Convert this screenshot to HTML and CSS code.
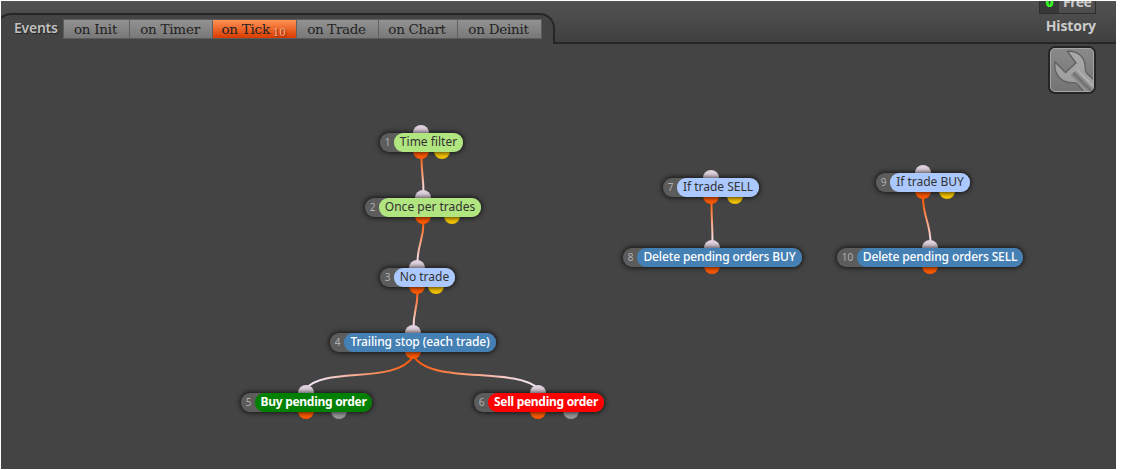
FILE: index.html
```html
<!DOCTYPE html>
<html lang="en">
<head>
  <meta charset="UTF-8" />
  <title>Events</title>
  <link rel="stylesheet" href="styles.css">
</head>
<body>
  <div class="app">
    <header class="topbar">
      <nav class="events">
        <span class="events-label">Events</span>
        <div class="tabs">
          <button class="tab tab-init"><span>on Init</span></button>
          <button class="tab tab-timer"><span>on Timer</span></button>
          <button class="tab tab-tick active"><span>on Tick</span><small>10</small></button>
          <button class="tab tab-trade"><span>on Trade</span></button>
          <button class="tab tab-chart"><span>on Chart</span></button>
          <button class="tab tab-deinit"><span>on Deinit</span></button>
        </div>
      </nav>
      <div class="account">
        <div class="plan"><b>0</b><span>Free</span></div>
        <span class="history">History</span>
      </div>
    </header>

    <main class="canvas">
      <!-- connections -->
      <svg class="wires" width="1115" height="425" viewBox="1 44 1115 425">
        <defs>
          <linearGradient id="w1" gradientUnits="userSpaceOnUse" x1="0" y1="158" x2="0" y2="192"><stop offset="0" stop-color="#ff6010"/><stop offset="1" stop-color="#f3e4f0"/></linearGradient>
          <linearGradient id="w2" gradientUnits="userSpaceOnUse" x1="0" y1="223" x2="0" y2="262"><stop offset="0" stop-color="#ff6010"/><stop offset="1" stop-color="#f3e4f0"/></linearGradient>
          <linearGradient id="w3" gradientUnits="userSpaceOnUse" x1="0" y1="293" x2="0" y2="327"><stop offset="0" stop-color="#ff6010"/><stop offset="1" stop-color="#f3e4f0"/></linearGradient>
          <linearGradient id="w5" gradientUnits="userSpaceOnUse" x1="413" y1="358" x2="318" y2="386"><stop offset="0" stop-color="#ff5500"/><stop offset="1" stop-color="#f3e4f0"/></linearGradient>
          <linearGradient id="w6" gradientUnits="userSpaceOnUse" x1="414" y1="358" x2="524" y2="386"><stop offset="0" stop-color="#ff5500"/><stop offset="1" stop-color="#f3e4f0"/></linearGradient>
          <linearGradient id="w7" gradientUnits="userSpaceOnUse" x1="0" y1="203" x2="0" y2="242"><stop offset="0" stop-color="#ff6010"/><stop offset="1" stop-color="#f3e4f0"/></linearGradient>
        </defs>
        <path d="M421.5 157C421.500 175 423.500 176 423.500 193" stroke="url(#w1)"/>
        <path d="M423.500 222C423.500 242 417.500 243 417.500 263" stroke="url(#w2)"/>
        <path d="M417.500 292C417.500 310 413.500 310 413.500 328" stroke="url(#w3)"/>
        <path d="M413.500 356C396 385 324 366 306 389" stroke="url(#w5)"/>
        <path d="M413.500 356C431 385 515 366 538.500 389" stroke="url(#w6)"/>
        <path d="M711.500 202C711.500 222 712.500 223 712.500 243" stroke="url(#w7)"/>
        <path d="M923 197C923 217 930.500 223 930.500 243" stroke="url(#w7)"/>
      </svg>

      <div class="node filter n1">
        <i class="dot in"></i><i class="dot out"></i><i class="dot out no"></i>
        <div class="block"><span class="num">1</span><span class="name">Time filter</span></div>
      </div>
      <div class="node filter n2">
        <i class="dot in"></i><i class="dot out"></i><i class="dot out no"></i>
        <div class="block"><span class="num">2</span><span class="name">Once per trades</span></div>
      </div>
      <div class="node condition n3">
        <i class="dot in"></i><i class="dot out"></i><i class="dot out no"></i>
        <div class="block"><span class="num">3</span><span class="name">No trade</span></div>
      </div>
      <div class="node action n4">
        <i class="dot in"></i><i class="dot out"></i>
        <div class="block"><span class="num">4</span><span class="name">Trailing stop (each trade)</span></div>
      </div>
      <div class="node buy n5">
        <i class="dot in"></i><i class="dot out"></i><i class="dot out err"></i>
        <div class="block"><span class="num">5</span><span class="name">Buy pending order</span></div>
      </div>
      <div class="node sell n6">
        <i class="dot in"></i><i class="dot out"></i><i class="dot out err"></i>
        <div class="block"><span class="num">6</span><span class="name">Sell pending order</span></div>
      </div>
      <div class="node condition n7">
        <i class="dot in"></i><i class="dot out"></i><i class="dot out no"></i>
        <div class="block"><span class="num">7</span><span class="name">If trade SELL</span></div>
      </div>
      <div class="node action n8">
        <i class="dot in"></i><i class="dot out"></i>
        <div class="block"><span class="num">8</span><span class="name">Delete pending orders BUY</span></div>
      </div>
      <div class="node condition n9">
        <i class="dot in"></i><i class="dot out"></i><i class="dot out no"></i>
        <div class="block"><span class="num">9</span><span class="name">If trade BUY</span></div>
      </div>
      <div class="node action n10">
        <i class="dot in"></i><i class="dot out"></i>
        <div class="block"><span class="num">10</span><span class="name">Delete pending orders SELL</span></div>
      </div>

      <button class="settings" aria-label="Settings">
        <svg width="44" height="44" viewBox="1 1 42 42">
          <defs>
            <linearGradient id="metal" x1="0" y1="0" x2="0" y2="1"><stop offset="0" stop-color="#aaa"/><stop offset="1" stop-color="#999"/></linearGradient>
            <linearGradient id="handle" gradientUnits="userSpaceOnUse" x1="21" y1="35" x2="34" y2="22"><stop offset="0" stop-color="#aaa"/><stop offset=".25" stop-color="#9c9c9c"/><stop offset=".48" stop-color="#6e6e6e"/><stop offset=".75" stop-color="#b4b4b4"/><stop offset="1" stop-color="#a4a4a4"/></linearGradient>
          </defs>
          <path d="M17.500 3.500C26 2 34 8 35 17C35.300 20 35 23 36.500 25L47 35L37 47L27 35.500C25 34 22 35 19 34.500C10 33 3.500 25 5 14L15.500 24.500L26 15Z" fill="url(#metal)" stroke="#606060" stroke-width="1.300"/>
          <path d="M20 28L27 21L48 41L41 48Z" fill="url(#handle)"/>
        </svg>
      </button>
    </main>
  </div>
</body>
</html>
```
FILE: styles.css
```css
body {
  margin: 0;
  padding: 1px;
  background: #fff;
  font-family: "Noto Sans", "Open Sans", sans-serif;
}
button {
  border: none;
  padding: 0;
}
.app {
  width: 1115px;
  height: 468px;
  overflow: hidden;
  background: #444;
}

/* top bar */
.topbar {
  display: flex;
  justify-content: space-between;
  height: 43px;
  box-sizing: border-box;
  border-bottom: 2px solid #262626;
  background: linear-gradient(#525252, #404040);
}
.events {
  display: flex;
  align-items: flex-start;
  box-sizing: border-box;
  width: 559px;
  height: 31px;
  margin: 12px 0 0 -5px;
  padding: 4px 0 0 16px;
  border: 2px solid #262626;
  border-bottom: none;
  border-radius: 15px 15px 0 0;
  background: #444;
}
.events-label {
  width: 49px;
  font-size: 14px;
  line-height: 17px;
  color: #c0c0c0;
  text-shadow: 1px 1px 1px #222;
  letter-spacing: -0.25px;
  font-weight: 600;
}
.tabs {
  display: flex;
  border: 1px solid #5c5c5c;
  height: 18px;
}
.tab {
  display: flex;
  align-items: center;
  justify-content: center;
  height: 18px;
  box-sizing: border-box;
  padding-right: 2px;
  border-right: 1px solid #606060;
  background: linear-gradient(#929292, #787878);
  color: #222;
  font-family: "DejaVu Serif", serif;
  font-size: 13.5px;
  line-height: 18px;
  letter-spacing: -0.25px;
  white-space: nowrap;
}
.tab:last-child {
  border-right: none;
}
.tab-init { width: 66px; }
.tab-timer { width: 83px; }
.tab-tick { width: 84px; }
.tab-trade { width: 82px; letter-spacing: -0.35px; }
.tab-chart { width: 79px; letter-spacing: -0.35px; }
.tab-deinit { width: 83px; }
.tab.active {
  background: linear-gradient(#ff9254, #d93b00);
}
.tab small {
  margin: 6px 0 0 3px;
  font-size: 10.5px;
  letter-spacing: -0.3px;
  color: #f3b08c;
  text-shadow: 1px 1px 1px #7c2a08;
}
.account {
  display: flex;
  flex-direction: column;
  align-items: flex-end;
  margin-right: 20px;
  color: #ccc;
  font-size: 14px;
  font-weight: bold;
}
.plan {
  display: flex;
  width: 57px;
  height: 13px;
  box-sizing: border-box;
  overflow: hidden;
  border: 1px solid #2e2e2e;
  border-top: none;
  line-height: 2px;
}
.plan b {
  width: 19px;
  background: #383838;
  color: #3f2;
  text-align: center;
}
.plan span {
  margin-left: 4px;
  letter-spacing: -0.5px;
}
.history {
  margin-top: 2px;
  line-height: 19px;
  letter-spacing: -0.1px;
}

/* workspace */
.canvas {
  position: relative;
  height: 425px;
}
.wires {
  display: block;
}
.wires path {
  fill: none;
  stroke-width: 2;
}
.node {
  position: absolute;
}
.block {
  position: relative;
  display: flex;
  height: 18.5px;
  border-radius: 9px;
  background: #5c5c5c;
  box-shadow: 0 0 5px 1px rgba(0, 0, 0, 0.7);
}
.num {
  width: 14px;
  padding-left: 1px;
  box-sizing: border-box;
  text-align: center;
  font-size: 10px;
  line-height: 18px;
  color: #b0b0b0;
}
.name {
  flex: 1;
  border-radius: 9px;
  text-align: center;
  font-size: 12px;
  line-height: 18px;
  white-space: nowrap;
}
.filter .name { background: #b0e580; color: #333; }
.condition .name { background: #abc9ff; color: #333; }
.action .name { background: #4580b5; color: #fff; font-weight: 500; letter-spacing: -0.12px; }
.buy .name { background: #008000; color: #fff; font-weight: bold; letter-spacing: -0.28px; }
.sell .name { background: #f00; color: #fff; font-weight: bold; letter-spacing: -0.28px; }

.dot {
  position: absolute;
  left: calc(var(--a) - 8px);
  width: 16px;
  height: 16px;
  border-radius: 50%;
}
.dot.in { top: -8px; background: #e2d3e0; }
.dot.out { top: 10px; background: #ff5a00; }
.dot.no, .dot.err { left: calc(var(--b) - 8px); }
.dot.no { background: #f5c400; }
.dot.err { background: #999; }

.n1 { left: 379px; top: 89px; width: 83px; --a: 41px; --b: 62px; }
.n2 { left: 364px; top: 154px; width: 116px; --a: 58px; --b: 87px; }
.n3 { left: 379px; top: 224px; width: 75px; --a: 37px; --b: 56px; }
.n4 { left: 329px; top: 289px; width: 166px; --a: 83px; }
.n5 { left: 240px; top: 349px; width: 131px; --a: 65px; --b: 98px; }
.n6 { left: 473px; top: 349px; width: 130px; --a: 64px; --b: 97px; }
.n7 { left: 662px; top: 134px; width: 96px; --a: 48px; --b: 72px; }
.n8 { left: 622px; top: 204px; width: 179px; --a: 89px; }
.n9 { left: 875px; top: 129px; width: 94px; --a: 47px; --b: 71px; }
.n10 { left: 836px; top: 204px; width: 186px; --a: 93px; }
.n10 .num { width: 20px; }

.settings {
  position: absolute;
  top: 2px;
  right: 20px;
  width: 48px;
  height: 48px;
  border: 2px solid #252525;
  border-radius: 7px;
  overflow: hidden;
  background: linear-gradient(#8a8a8a, #747474);
}
.settings svg {
  display: block;
  box-sizing: border-box;
  border: 1px solid #a6a6a6;
  border-radius: 5px;
}
```
